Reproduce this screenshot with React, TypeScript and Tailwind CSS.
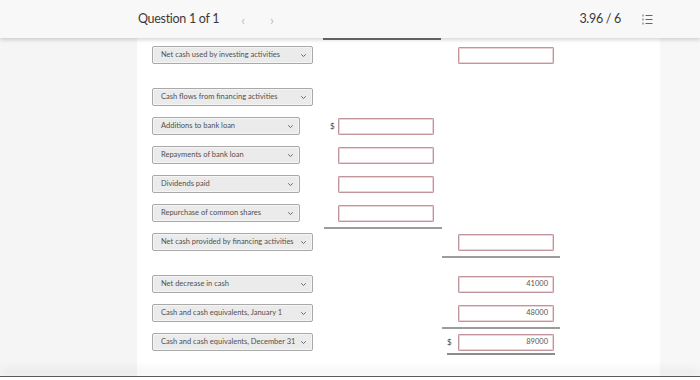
import React from "react";

type Row = {
  label: string;
  wide?: boolean;
  mid?: boolean;
  midDollar?: boolean;
  midLine?: boolean;
  right?: boolean;
  rightDollar?: boolean;
  rightValue?: string;
  rightLine?: "full" | "short";
  gapBefore?: boolean;
};

const rows: Row[] = [
  { label: "Net cash used by investing activities", wide: true, right: true },
  { label: "Cash flows from financing activities", wide: true, gapBefore: true },
  { label: "Additions to bank loan", mid: true, midDollar: true },
  { label: "Repayments of bank loan", mid: true },
  { label: "Dividends paid", mid: true },
  { label: "Repurchase of common shares", mid: true, midLine: true },
  { label: "Net cash provided by financing activities", wide: true, right: true, rightLine: "full" },
  { label: "Net decrease in cash", wide: true, right: true, rightValue: "41000", gapBefore: true },
  { label: "Cash and cash equivalents, January 1", wide: true, right: true, rightValue: "48000", rightLine: "full" },
  { label: "Cash and cash equivalents, December 31", wide: true, right: true, rightDollar: true, rightValue: "89000", rightLine: "short" },
];

function Chevron() {
  return (
    <svg width="7" height="5" viewBox="0 0 7 5" className="shrink-0">
      <path d="M1.2 1.3 L3.5 3.5 L5.8 1.3" fill="none" stroke="#6a6a6a" strokeWidth="1" />
    </svg>
  );
}

function Select({ label, wide }: { label: string; wide?: boolean }) {
  return (
    <div
      className={`${wide ? "w-[161px]" : "w-[148px]"} h-[18px] flex items-center justify-between pl-[8px] pr-[5px] bg-[#ebebeb] border border-[#a9a9a9] rounded-[2px] shadow-[inset_0_0_0_1px_#f5f5f5]`}
    >
      <span className="text-[7.5px] text-[#505050] whitespace-nowrap">{label}</span>
      <Chevron />
    </div>
  );
}

function Field({ value }: { value?: string }) {
  return (
    <div className="w-[96px] h-[17px] flex items-center justify-end pr-[5px] bg-white border border-[#c0959b] rounded-[1px] shadow-[inset_0_0_0_1px_#ead4d7]">
      <span className="text-[7.5px] text-[#555]">{value}</span>
    </div>
  );
}

function ListIcon() {
  return (
    <svg width="11" height="11" viewBox="0 0 11 11">
      <g stroke="#666" strokeWidth="1">
        <line x1="1" y1="0.5" x2="1" y2="2.5" />
        <line x1="1" y1="4.5" x2="1" y2="6.5" />
        <line x1="1" y1="8.5" x2="1" y2="10.5" />
        <line x1="3.5" y1="1.5" x2="10.5" y2="1.5" />
        <line x1="3.5" y1="5.5" x2="10.5" y2="5.5" />
        <line x1="3.5" y1="9.5" x2="10.5" y2="9.5" />
      </g>
    </svg>
  );
}

export default function App() {
  return (
    <div className="w-[700px] h-[380px] flex flex-col bg-[#f5f5f5] overflow-hidden" style={{ fontFamily: "Lato, 'Open Sans', sans-serif" }}>
      <div className="relative z-10 h-[38px] shrink-0 flex items-center bg-[#f8f8f8] shadow-[0_2px_4px_rgba(0,0,0,0.16)]">
        <div className="w-[138px]" />
        <span className="text-[12.5px] text-[#3a3a3a] tracking-[-0.3px]">Question 1 of 1</span>
        <span className="ml-[22px] text-[14px] text-[#bdbdbd]">&lsaquo;</span>
        <span className="ml-[25px] text-[14px] text-[#bdbdbd]">&rsaquo;</span>
        <div className="flex-1" />
        <span className="text-[12.5px] text-[#3a3a3a] tracking-[-0.3px]">3.96 / 6</span>
        <div className="ml-[21px] mr-[47px] flex items-center">
          <ListIcon />
        </div>
      </div>

      <div className="flex-1 flex">
        <div className="w-[137px] bg-[#f5f5f5]" />
        <div className="w-[523px] bg-white flex flex-col">
          <div className="h-[8px] flex">
            <div className="w-[186px]" />
            <div className="w-[118px] h-[2px] bg-[#6e6e6e]" />
          </div>
          {rows.map((r) => (
            <div key={r.label} className={`h-[29px] flex items-start shrink-0 ${r.gapBefore ? "mt-[13px]" : ""}`}>
              <div className="w-[187px] pl-[15px]">
                <Select label={r.label} wide={r.wide} />
              </div>
              <div className="w-[118px] flex flex-col">
                {r.mid && (
                  <div className="flex items-center h-[18px]">
                    <span className="w-[14px] pl-[6px] text-[8px] text-[#444]">{r.midDollar ? "$" : ""}</span>
                    <Field />
                  </div>
                )}
                {r.midLine && <div className="mt-[5px] h-[2px] bg-[#9c9c9c]" />}
              </div>
              <div className="w-[118px] flex flex-col">
                {r.right && (
                  <div className="flex items-center h-[18px]">
                    <span className="w-[16px] pl-[5px] text-[8px] text-[#444]">{r.rightDollar ? "$" : ""}</span>
                    <Field value={r.rightValue} />
                  </div>
                )}
                {r.rightLine === "full" && <div className="mt-[5px] h-[2px] bg-[#9c9c9c]" />}
                {r.rightLine === "short" && <div className="mt-[2px] ml-[5px] w-[108px] h-[2px] bg-[#8c8c8c]" />}
              </div>
            </div>
          ))}
        </div>
        <div className="flex-1 bg-[#f7f7f7]" />
      </div>

      <div className="h-[4px] shrink-0 bg-white border-t border-[#5a5a5a] shadow-[0_-6px_10px_rgba(0,0,0,0.09)]" />
    </div>
  );
}
